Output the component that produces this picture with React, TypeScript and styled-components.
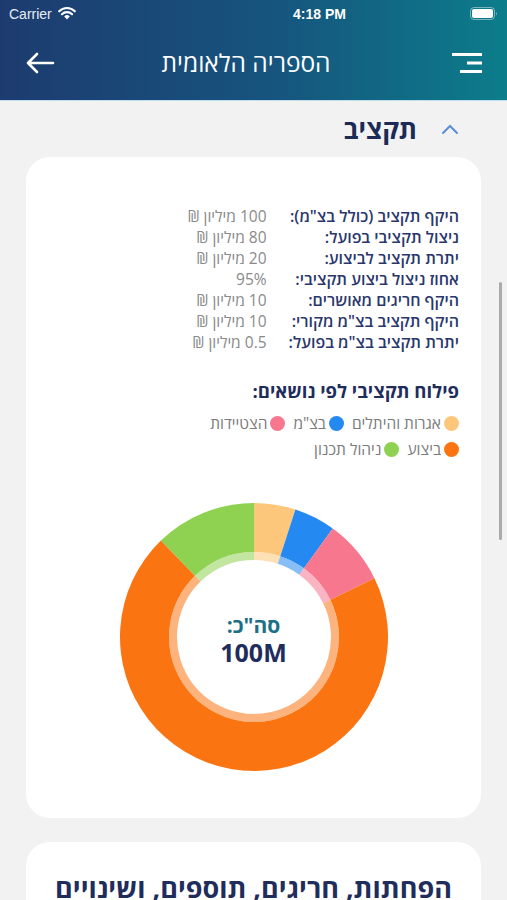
import React from 'react';
import styled, { createGlobalStyle } from 'styled-components';

const GlobalStyle = createGlobalStyle`
    html, body {
        margin: 0;
        padding: 0;
        background: #f2f2f2;
    }
    body {
        font-family: "Open Sans", "DejaVu Sans", "Liberation Sans", sans-serif;
    }
`;

type RowType = { label: string; value: string };

const rows: RowType[] = [
    { label: 'היקף תקציב (כולל בצ"מ):', value: '100 מיליון ₪' },
    { label: 'ניצול תקציבי בפועל:', value: '80 מיליון ₪' },
    { label: 'יתרת תקציב לביצוע:', value: '20 מיליון ₪' },
    { label: 'אחוז ניצול ביצוע תקציבי:', value: '95%' },
    { label: 'היקף חריגים מאושרים:', value: '10 מיליון ₪' },
    { label: 'היקף תקציב בצ"מ מקורי:', value: '10 מיליון ₪' },
    { label: 'יתרת תקציב בצ"מ בפועל:', value: '0.5 מיליון ₪' },
];

type SliceType = { name: string; color: string; from: number; to: number };

const slices: SliceType[] = [
    { name: 'אגרות והיתלים', color: '#fdc77b', from: 0, to: 18 },
    { name: 'בצ"מ', color: '#2489f0', from: 18, to: 36 },
    { name: 'הצטיידות', color: '#f7778f', from: 36, to: 64 },
    { name: 'ביצוע', color: '#fb7412', from: 64, to: 316 },
    { name: 'ניהול תכנון', color: '#8fd150', from: 316, to: 360 },
];

const legendRows = [
    [slices[0], slices[1], slices[2]],
    [slices[3], slices[4]],
];

const point = (c: number, r: number, a: number) => {
    const rad = (a * Math.PI) / 180;
    return `${c + r * Math.sin(rad)} ${c - r * Math.cos(rad)}`;
};

const ring = (c: number, r0: number, r1: number, a0: number, a1: number) => {
    const large = a1 - a0 > 180 ? 1 : 0;
    return [
        `M ${point(c, r1, a0)}`,
        `A ${r1} ${r1} 0 ${large} 1 ${point(c, r1, a1)}`,
        `L ${point(c, r0, a1)}`,
        `A ${r0} ${r0} 0 ${large} 0 ${point(c, r0, a0)}`,
        'Z',
    ].join(' ');
};

const Donut = () => {
    const c = 135;
    return (
        <ChartBox>
            <svg width="270" height="270" viewBox="0 0 270 270">
                {slices.map((s) => (
                    <g key={s.name}>
                        <path d={ring(c, 85, 134, s.from, s.to)} fill={s.color} />
                        <path d={ring(c, 77, 85, s.from, s.to)} fill={s.color} opacity={0.55} />
                    </g>
                ))}
            </svg>
            <ChartCenter>
                <TotalLabel>סה"כ:</TotalLabel>
                <TotalValue>100M</TotalValue>
            </ChartCenter>
        </ChartBox>
    );
};

const StatusBar = () => (
    <StyledStatusBar>
        <Carrier>
            Carrier
            <svg width="18" height="13" viewBox="0 0 18 13">
                <path d="M9 12.5 L6.2 9.4 A4 4 0 0 1 11.8 9.4 Z" fill="#fff" />
                <path d="M3.9 7.2 A7.3 7.3 0 0 1 14.1 7.2" stroke="#fff" strokeWidth="2.1" fill="none" strokeLinecap="round" />
                <path d="M1.2 4.3 A11 11 0 0 1 16.8 4.3" stroke="#fff" strokeWidth="2.1" fill="none" strokeLinecap="round" />
            </svg>
        </Carrier>
        <Time>4:18 PM</Time>
        <svg width="28" height="13" viewBox="0 0 28 13">
            <rect x="0.5" y="0.5" width="24" height="12" rx="3.5" fill="none" stroke="rgba(255,255,255,0.45)" />
            <rect x="2" y="2" width="21" height="9" rx="2" fill="#fff" />
            <path d="M26 4.5 Q27.5 6.5 26 8.5 Z" fill="rgba(255,255,255,0.5)" />
        </svg>
    </StyledStatusBar>
);

export default function App() {
    return (
        <Page>
            <GlobalStyle />
            <Header>
                <StatusBar />
                <NavBar>
                    <IconButton aria-label="back">
                        <svg width="30" height="22" viewBox="0 0 30 22">
                            <path d="M28 11 H3 M12 2 L3 11 L12 20" stroke="#fff" strokeWidth="2.6" fill="none" strokeLinecap="round" strokeLinejoin="round" />
                        </svg>
                    </IconButton>
                    <NavTitle>הספריה הלאומית</NavTitle>
                    <IconButton aria-label="menu">
                        <svg width="32" height="24" viewBox="0 0 32 24">
                            <rect x="1" y="2" width="30" height="3" fill="#fff" />
                            <rect x="16" y="10.5" width="15" height="3" fill="#fff" />
                            <rect x="9" y="19" width="22" height="3" fill="#fff" />
                        </svg>
                    </IconButton>
                </NavBar>
            </Header>

            <Content>
                <SectionHead>
                    <svg width="18" height="12" viewBox="0 0 18 12">
                        <path d="M2 10 L9 3 L16 10" stroke="#5a8ed0" strokeWidth="2" fill="none" strokeLinecap="round" />
                    </svg>
                    <SectionTitle>תקציב</SectionTitle>
                </SectionHead>

                <Card>
                    <InfoGrid>
                        {rows.map((r) => (
                            <React.Fragment key={r.label}>
                                <InfoLabel>{r.label}</InfoLabel>
                                <InfoValue>{r.value}</InfoValue>
                            </React.Fragment>
                        ))}
                    </InfoGrid>

                    <ChartTitle>פילוח תקציבי לפי נושאים:</ChartTitle>
                    <Legend>
                        {legendRows.map((row, i) => (
                            <LegendRow key={i}>
                                {row.map((s) => (
                                    <LegendItem key={s.name}>
                                        <Dot color={s.color} />
                                        {s.name}
                                    </LegendItem>
                                ))}
                            </LegendRow>
                        ))}
                    </Legend>
                    <Donut />
                </Card>

                <SecondCard>
                    <CardHeading>הפחתות, חריגים, תוספים, ושינויים</CardHeading>
                </SecondCard>
            </Content>

            <ScrollIndicator />
        </Page>
    );
}

const Page = styled.div`
    position: relative;
    height: 900px;
    overflow: hidden;
    background: #f2f2f2;
`;

const Header = styled.header`
    height: 100px;
    background: linear-gradient(90deg, #1d3b6f 0%, #16557e 55%, #0c7d8b 100%);
    box-shadow: 0 1px 0 #bfe0ea;
    display: flex;
    flex-direction: column;
`;

const StyledStatusBar = styled.div`
    height: 27px;
    padding: 0 9px;
    display: flex;
    align-items: center;
    justify-content: space-between;
    color: #fff;
    font-family: "Liberation Sans", Arial, sans-serif;
    font-size: 14px;
`;

const Carrier = styled.div`
    width: 110px;
    display: flex;
    align-items: center;
    gap: 6px;
    color: #e6ecf4;
`;

const Time = styled.div`
    font-weight: 700;
    font-size: 14px;
    margin-left: 50px;
`;

const NavBar = styled.div`
    flex: 1;
    display: flex;
    align-items: center;
    justify-content: space-between;
    padding: 0 24px 2px 25px;
`;

const IconButton = styled.div`
    display: flex;
    align-items: center;
`;

const NavTitle = styled.h1`
    margin: 0 0 0 -14px;
    color: #fff;
    font-size: 24.5px;
    font-weight: 500;
    direction: rtl;
`;

const Content = styled.main`
    direction: rtl;
    padding: 10px 26px 0;
`;

const SectionHead = styled.div`
    display: flex;
    align-items: center;
    gap: 24px;
    padding-right: 22px;
    height: 38px;
`;

const SectionTitle = styled.h2`
    margin: 0;
    font-size: 26px;
    font-weight: 700;
    color: #1c2a57;
`;

const Card = styled.section`
    margin-top: 9px;
    background: #fff;
    border-radius: 24px;
    padding: 49px 22px 46px;
`;

const InfoGrid = styled.div`
    display: grid;
    grid-template-columns: auto auto;
    justify-content: start;
    column-gap: 22px;
`;

const InfoLabel = styled.div`
    font-size: 16px;
    line-height: 21px;
    font-weight: 600;
    color: #2a376c;
`;

const InfoValue = styled.div`
    font-size: 15.5px;
    line-height: 21px;
    color: #8a8a8a;
`;

const ChartTitle = styled.h3`
    margin: 24px 0 0;
    font-size: 18.5px;
    line-height: 28px;
    font-weight: 700;
    color: #1f2d5c;
`;

const Legend = styled.div`
    margin-top: 5px;
`;

const LegendRow = styled.div`
    display: flex;
    gap: 8px;
    height: 26px;
    align-items: center;
`;

const LegendItem = styled.div`
    display: flex;
    align-items: center;
    gap: 3px;
    font-size: 15.5px;
    color: #7b7b7b;
`;

const Dot = styled.span<{ color: string }>`
    width: 15px;
    height: 15px;
    border-radius: 50%;
    background: ${(p) => p.color};
`;

const ChartBox = styled.div`
    position: relative;
    width: 270px;
    height: 270px;
    margin: 40px auto 0;
`;

const ChartCenter = styled.div`
    position: absolute;
    inset: 0;
    display: flex;
    flex-direction: column;
    align-items: center;
    justify-content: center;
    padding-top: 4px;
`;

const TotalLabel = styled.div`
    font-size: 21px;
    line-height: 25px;
    font-weight: 700;
    color: #1b6f87;
`;

const TotalValue = styled.div`
    font-size: 25px;
    line-height: 28px;
    font-weight: 700;
    color: #1f2d5c;
    direction: ltr;
`;

const SecondCard = styled.section`
    margin-top: 24px;
    background: #fff;
    border-radius: 24px;
    padding: 28px 22px 40px;
`;

const CardHeading = styled.h2`
    margin: 0;
    text-align: center;
    font-size: 27px;
    line-height: 36px;
    font-weight: 700;
    color: #1f2d5c;
`;

const ScrollIndicator = styled.div`
    position: absolute;
    right: 5px;
    top: 282px;
    width: 3px;
    height: 258px;
    border-radius: 2px;
    background: #ababab;
`;
